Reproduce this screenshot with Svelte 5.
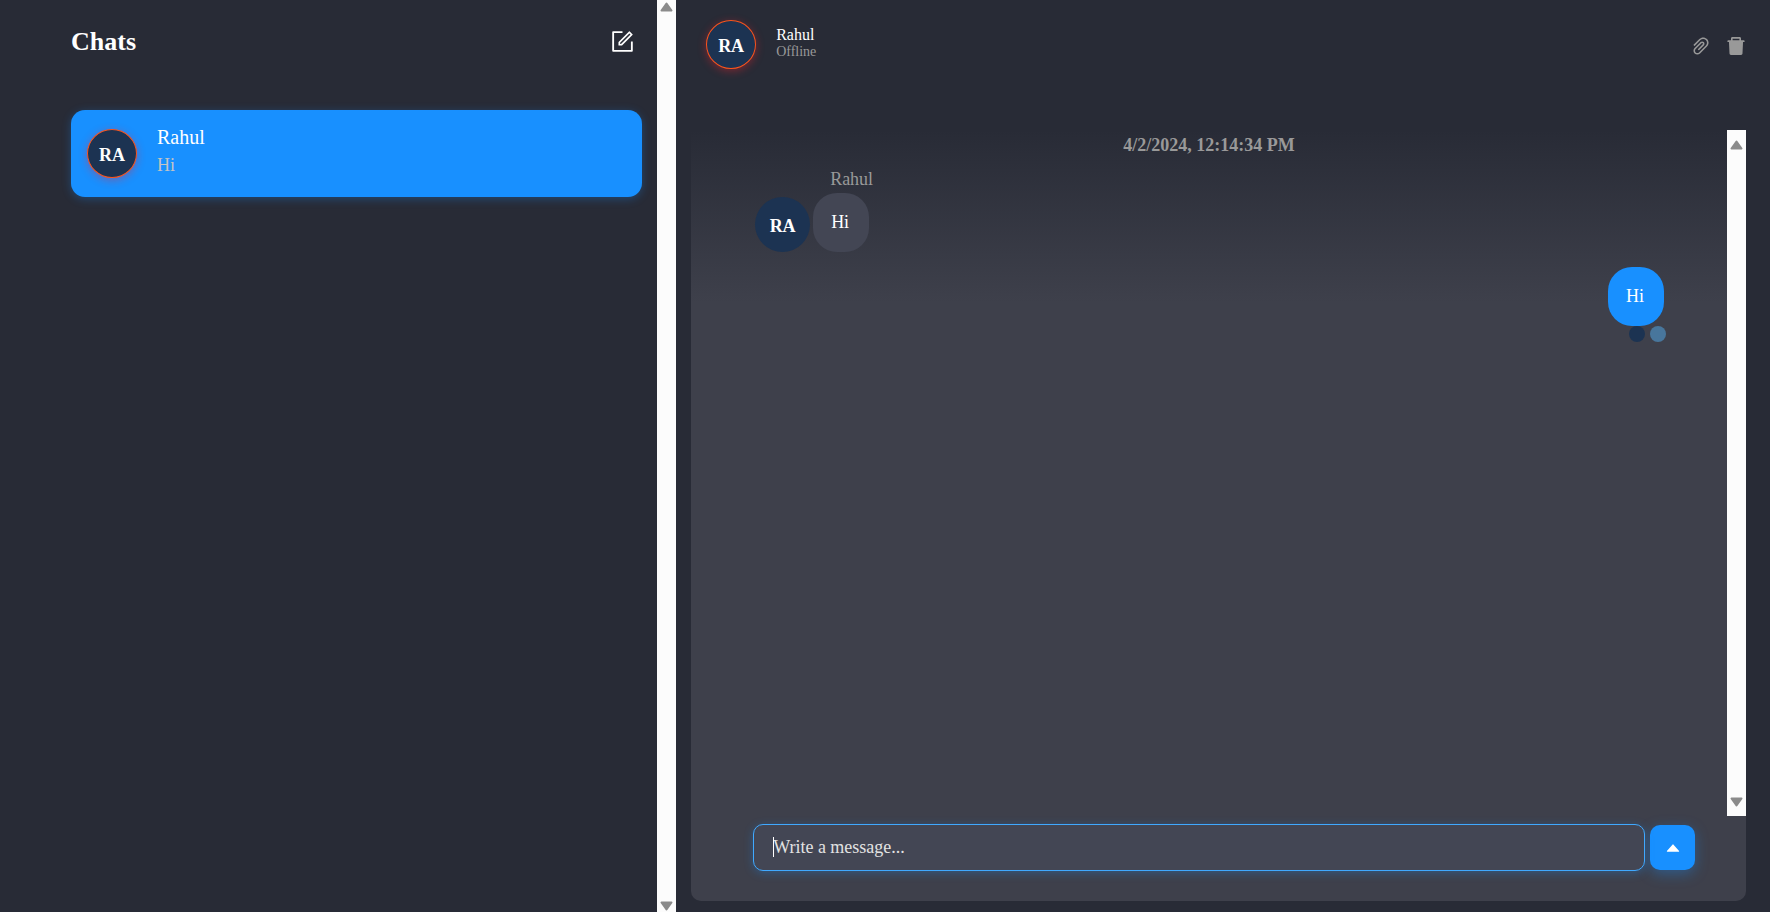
<script>
  const chat = { name: 'Rahul', initials: 'RA', status: 'Offline', preview: 'Hi' };
  let draft = $state('');
</script>

<div class="app">
  <aside class="sidebar">
    <div class="chats">
      <header class="chats-head">
        <h1>Chats</h1>
        <button class="icon-button light" aria-label="New chat">
          <svg width="23" height="23" viewBox="64 64 896 896" fill="currentColor" aria-hidden="true">
            <path d="M904 512h-56c-4.4 0-8 3.6-8 8v320H184V184h320c4.4 0 8-3.6 8-8v-56c0-4.4-3.6-8-8-8H144c-17.7 0-32 14.3-32 32v736c0 17.7 14.3 32 32 32h736c17.7 0 32-14.3 32-32V520c0-4.4-3.6-8-8-8z" />
            <path d="M355.9 534.9L354 653.8c-.1 8.9 7.1 16.2 16 16.2h.4l118-2.9c2-.1 4-.9 5.4-2.3l415.9-415c3.1-3.1 3.1-8.2 0-11.3L785.4 114.3c-1.6-1.6-3.6-2.3-5.7-2.3s-4.1.8-5.7 2.3l-415.8 415a8.3 8.3 0 00-2.3 5.6zm63.5 23.6L779.7 199l45.2 45.1-360.5 359.7-45.7 1.1.7-46.4z" />
          </svg>
        </button>
      </header>
      <button class="card">
        <span class="avatar ringed">{chat.initials}</span>
        <span class="card-text">
          <span class="card-name">{chat.name}</span>
          <span class="card-preview">{chat.preview}</span>
        </span>
      </button>
    </div>
    {@render scrollbar('page-bar')}
  </aside>

  <main>
    <header class="chat-head">
      <span class="avatar ringed">{chat.initials}</span>
      <div class="who">
        <h2>{chat.name}</h2>
        <p>{chat.status}</p>
      </div>
      <div class="actions">
        <button class="icon-button" aria-label="Attach file">
          <svg width="20" height="20" viewBox="64 64 896 896" fill="currentColor" aria-hidden="true">
            <path d="M779.3 196.6c-94.2-94.2-247.6-94.2-341.7 0l-261 260.8c-1.7 1.7-2.6 4-2.6 6.4s.9 4.7 2.6 6.4l36.9 36.9a9 9 0 0012.7 0l261-260.8c32.4-32.4 75.5-50.2 121.3-50.2s88.9 17.8 121.2 50.2c32.4 32.4 50.2 75.5 50.2 121.2 0 45.8-17.8 88.8-50.2 121.2l-266 265.9-43.1 43.1c-40.3 40.3-105.8 40.3-146.1 0-19.5-19.5-30.2-45.4-30.2-73s10.7-53.5 30.2-73l263.9-263.8c6.7-6.6 15.5-10.3 24.9-10.3h.1c9.4 0 18.1 3.7 24.7 10.3 6.7 6.7 10.3 15.5 10.3 24.9 0 9.3-3.7 18.1-10.3 24.7L372.4 653c-1.7 1.7-2.6 4-2.6 6.4s.9 4.7 2.6 6.4l36.9 36.9a9 9 0 0012.7 0l215.6-215.6c19.9-19.9 30.8-46.3 30.8-74.4s-11-54.6-30.8-74.4c-41.1-41.1-107.9-41-149 0L463 364 224.8 602.1A172.22 172.22 0 00174 724.8c0 46.3 18.1 89.8 50.8 122.5 33.9 33.8 78.3 50.7 122.7 50.7 44.4 0 88.8-16.9 122.6-50.7l309.2-309C824.8 492.7 850 432 850 367.5c.1-64.6-25.1-125.3-70.7-170.9z" />
          </svg>
        </button>
        <button class="icon-button" aria-label="Delete chat">
          <svg width="20" height="20" viewBox="64 64 896 896" fill="currentColor" aria-hidden="true">
            <path d="M864 256H736v-80c0-35.3-28.7-64-64-64H352c-35.3 0-64 28.7-64 64v80H160c-17.7 0-32 14.3-32 32v32c0 4.4 3.6 8 8 8h60.4l24.7 523c1.6 34.1 29.8 61 63.9 61h454c34.2 0 62.3-26.8 63.9-61l24.7-523H888c4.4 0 8-3.6 8-8v-32c0-17.7-14.3-32-32-32zm-200 0H360v-72h304v72z" />
          </svg>
        </button>
      </div>
    </header>

    <section class="feed">
      <div class="feed-scroll">
        <div class="messages">
          <time datetime="2024-04-02T12:14:34">4/2/2024, 12:14:34 PM</time>
          <div class="incoming">
            <span class="sender">{chat.name}</span>
            <div class="incoming-row">
              <span class="avatar large">{chat.initials}</span>
              <p class="bubble">Hi</p>
            </div>
          </div>
          <div class="outgoing">
            <p class="bubble own">Hi</p>
            <div class="receipts">
              <span class="dot"></span>
              <span class="dot pale"></span>
            </div>
          </div>
        </div>
        {@render scrollbar('feed-bar')}
      </div>

      <form onsubmit={(e) => e.preventDefault()}>
        <div class="field">
          <input type="text" aria-label="Message" placeholder="Write a message..." bind:value={draft} />
          <span class="caret"></span>
        </div>
        <button class="send" aria-label="Send">
          <svg width="18" height="18" viewBox="0 0 1024 1024" fill="currentColor" aria-hidden="true">
            <path d="M858.9 689L530.5 308.2c-9.4-10.9-27.5-10.9-37 0L165.1 689c-12.2 14.2-1.2 35 18.5 35h656.8c19.7 0 30.7-20.8 18.5-35z" />
          </svg>
        </button>
      </form>
    </section>
  </main>
</div>

{#snippet scrollbar(kind)}
  <div class="scrollbar {kind}" aria-hidden="true">
    <svg width="13" height="10" viewBox="0 0 13 10"><path d="M6.5 1.5 11.5 8.5H1.5Z" /></svg>
    <svg width="13" height="10" viewBox="0 0 13 10"><path d="M1.5 1.5H11.5L6.5 8.5Z" /></svg>
  </div>
{/snippet}

<style>
  :global(body) {
    margin: 0;
    background: #282b36;
  }

  .app {
    display: flex;
    height: 100vh;
    overflow: hidden;
    background: #282b36;
    color: #fff;
    font-family: "Liberation Serif", "Times New Roman", serif;
    font-size: 18px;
    line-height: 20px;
  }

  h1, h2, p {
    margin: 0;
  }

  button, input {
    font: inherit;
    color: inherit;
  }

  button {
    border: 0;
    padding: 0;
    background: none;
    cursor: pointer;
  }

  svg {
    display: block;
  }

  .sidebar {
    display: flex;
    flex: 0 0 38.2%;
  }

  .chats {
    flex: 1;
    padding: 0 15px 0 71px;
  }

  .chats-head {
    display: flex;
    align-items: center;
    justify-content: space-between;
    height: 83px;
    margin-bottom: 27px;
    padding-right: 8px;
  }

  h1 {
    font-size: 26px;
    line-height: 30px;
  }

  .icon-button {
    color: #999;
  }

  .icon-button.light {
    color: #fff;
  }

  .card {
    display: flex;
    align-items: center;
    gap: 20px;
    width: 100%;
    height: 87px;
    padding: 0 16px;
    border-radius: 14px;
    background: #1890ff;
    box-shadow: 0 2px 10px rgba(24, 144, 255, 0.3);
    text-align: left;
  }

  .card-text {
    display: flex;
    flex-direction: column;
    gap: 4px;
    padding-bottom: 6px;
  }

  .card-name {
    font-size: 20px;
    line-height: 24px;
  }

  .card-preview {
    color: #c4c4c4;
    line-height: 24px;
  }

  .avatar {
    box-sizing: border-box;
    display: flex;
    flex: none;
    align-items: center;
    justify-content: center;
    width: 50px;
    height: 49px;
    padding-top: 2px;
    border-radius: 50%;
    background: #1c3352;
    font-weight: bold;
  }

  .avatar.ringed {
    border: 1px solid #fa541c;
    box-shadow: 0 2px 8px rgba(245, 34, 45, 0.4);
  }

  .avatar.large {
    width: 55px;
    height: 55px;
  }

  .scrollbar {
    box-sizing: border-box;
    display: flex;
    flex: none;
    flex-direction: column;
    align-items: center;
    justify-content: space-between;
    width: 19px;
    padding: 2px 0 1px;
    background: #fcfcfc;
  }

  .scrollbar.feed-bar {
    padding: 10px 0 9px;
  }

  .scrollbar path {
    fill: #8b8b8b;
    stroke: #8b8b8b;
    stroke-width: 2;
    stroke-linejoin: round;
  }

  main {
    display: flex;
    flex: 1;
    flex-direction: column;
    padding: 0 24px 11px 15px;
  }

  .chat-head {
    box-sizing: border-box;
    display: flex;
    gap: 20px;
    height: 130px;
    padding: 20px 0 0 15px;
  }

  .who {
    padding-top: 6px;
  }

  h2 {
    font-size: 16px;
    font-weight: normal;
    line-height: 18px;
  }

  .who p {
    color: #999;
    font-size: 14px;
    line-height: 16px;
  }

  .actions {
    display: flex;
    align-items: flex-start;
    gap: 15px;
    margin-left: auto;
    padding-top: 16px;
  }

  .feed {
    display: flex;
    flex: 1;
    flex-direction: column;
    border-radius: 0 0 10px 10px;
    background: linear-gradient(#282b36, #3e404b 172px);
  }

  .feed-scroll {
    display: flex;
    flex: 1;
  }

  .messages {
    flex: 1;
    padding: 5px 63px 0;
  }

  time {
    display: block;
    color: #999;
    font-weight: bold;
    text-align: center;
  }

  .incoming {
    margin-top: 14px;
  }

  .sender {
    display: block;
    padding: 0 0 4px 76px;
    color: #999;
  }

  .incoming-row {
    display: flex;
    align-items: flex-end;
    gap: 3px;
    padding-left: 1px;
  }

  .bubble {
    padding: 19px 20px 20px 18px;
    border-radius: 24px;
    background: #434654;
  }

  .bubble.own {
    background: #1890ff;
  }

  .outgoing {
    display: flex;
    flex-direction: column;
    align-items: flex-end;
    margin-top: 15px;
  }

  .receipts {
    display: flex;
    gap: 5px;
    margin-right: -2px;
  }

  .dot {
    width: 16px;
    height: 16px;
    border-radius: 50%;
    background: #1c3352;
  }

  .dot.pale {
    background: #48769c;
  }

  form {
    display: flex;
    align-items: center;
    gap: 5px;
    padding: 8px 51px 30px 62px;
  }

  .field {
    position: relative;
    flex: 1;
  }

  input {
    box-sizing: border-box;
    display: block;
    width: 100%;
    height: 47px;
    padding: 0 19px;
    border: 1px solid #40a9ff;
    border-radius: 10px;
    outline: none;
    background: #434654;
    box-shadow: 0 2px 10px rgba(24, 144, 255, 0.3);
  }

  input::placeholder {
    color: #e2e2e2;
    opacity: 1;
  }

  .caret {
    position: absolute;
    top: 13px;
    left: 20px;
    width: 1px;
    height: 20px;
    background: #fff;
  }

  .send {
    display: flex;
    align-items: center;
    justify-content: center;
    width: 45px;
    height: 45px;
    border-radius: 10px;
    background: #1890ff;
    box-shadow: 0 4px 14px rgba(24, 144, 255, 0.35);
  }
</style>
